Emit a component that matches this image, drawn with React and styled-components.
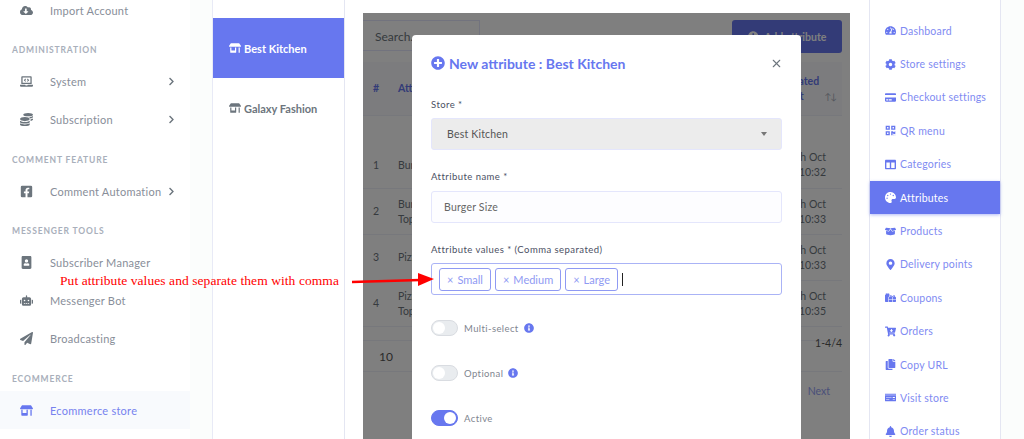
import { createGlobalStyle, styled } from 'styled-components';
import { X } from 'lucide-react';
import {
    FaBell,
    FaBoxOpen,
    FaCartArrowDown,
    FaChevronRight,
    FaCloudDownloadAlt,
    FaCoins,
    FaColumns,
    FaCopy,
    FaCreditCard,
    FaFacebookSquare,
    FaGifts,
    FaInfoCircle,
    FaLaptopCode,
    FaMapMarkerAlt,
    FaMoneyCheck,
    FaPalette,
    FaPaperPlane,
    FaPlusCircle,
    FaPortrait,
    FaQrcode,
    FaCog,
    FaRobot,
    FaStoreAlt,
    FaTachometerAlt,
} from 'react-icons/fa';

const GlobalStyle = createGlobalStyle`
    html, body {
        margin: 0;
        background: #fbfdfc;
    }
    * {
        box-sizing: border-box;
    }
`;

const Page = styled.div`
    position: relative;
    display: flex;
    width: 1024px;
    height: 439px;
    overflow: hidden;
    font-family: Lato, 'Liberation Sans', sans-serif;
    font-size: 13px;
`;

const Sidebar = styled.nav`
    flex: 0 0 190px;
    margin-top: -9px;
    background: #fff;
`;

const SectionLabel = styled.div`
    height: 33.6px;
    padding: 15px 0 0 12px;
    font-size: 8.5px;
    line-height: 12px;
    font-weight: 700;
    letter-spacing: 0.85px;
    text-transform: uppercase;
    color: #a9afbb;
`;

const SideRow = styled.a`
    display: flex;
    align-items: center;
    height: 38px;
    padding: 0 14px 0 20px;
    font-size: 11px;
    letter-spacing: 0.25px;
    color: ${(p) => (p.$active ? '#7682ef' : '#888e99')};
    background: ${(p) => (p.$active ? '#f8fafd' : 'transparent')};

    & > svg:first-child {
        flex: 0 0 13px;
        font-size: 13px;
        margin-right: 17px;
        color: ${(p) => (p.$active ? '#6777ef' : '#6c757d')};
    }
`;

const Chevron = styled(FaChevronRight)`
    margin-left: auto;
    font-size: 9px;
    color: #6c757d;
`;

const StoreCard = styled.div`
    flex: 0 0 133px;
    margin-left: 22px;
    padding-top: 18px;
    background: #fff;
    border-left: 1px solid #e8eaf6;
    border-right: 1px solid #e4e6f2;
`;

const StoreItem = styled.div`
    display: flex;
    align-items: center;
    gap: 3px;
    height: 60px;
    padding-left: 16px;
    font-size: 11px;
    font-weight: 700;
    color: ${(p) => (p.$active ? '#fff' : '#6c757d')};
    background: ${(p) => (p.$active ? '#6777ef' : 'transparent')};

    svg {
        font-size: 12px;
    }
`;

const Content = styled.main`
    flex: 0 0 524px;
    padding: 13px 19px 0 18px;
    background: #fff;
`;

const Panel = styled.div`
    position: relative;
    height: 100%;
    padding: 7px 8px 0 0;
    overflow: hidden;
    background: #fff;
    color: #6c757d;
`;

const Backdrop = styled.div`
    position: absolute;
    inset: 0;
    background: rgba(0, 0, 0, 0.5);
`;

const Toolbar = styled.div`
    display: flex;
    justify-content: space-between;
    height: 42px;
`;

const SearchBox = styled.div`
    width: 117px;
    height: 31px;
    padding: 8px 0 0 12px;
    font-size: 12px;
    border: 1px solid #e4e6fc;
    border-left: 0;
    color: #6c757d;
`;

const AddButton = styled.div`
    display: flex;
    align-items: center;
    justify-content: center;
    gap: 6px;
    width: 110px;
    height: 33px;
    font-size: 10.5px;
    font-weight: 700;
    color: #fff;
    background: #6777ef;
    border-radius: 3px;
`;

const TableRow = styled.div`
    display: grid;
    grid-template-columns: 26px 1fr 90px;
    align-items: center;
    height: ${(p) => p.$height}px;
    padding-top: ${(p) => p.$top || 0}px;
    background: ${(p) => (p.$head ? '#f8f9fc' : '#fff')};
    border-bottom: 1px solid #eef0f8;
    line-height: 15px;
    font-size: 10.5px;
    font-weight: ${(p) => (p.$head ? 700 : 400)};
    color: ${(p) => (p.$head ? '#6777ef' : '#6c757d')};

    & > :first-child {
        text-align: center;
    }
    & > :nth-child(2) {
        padding-left: 9px;
    }
    & > :last-child {
        padding: ${(p) => (p.$head ? '0 0 0 4px' : '0 16px 0 0')};
        text-align: ${(p) => (p.$head ? 'center' : 'right')};
    }
`;

const SortMark = styled.span`
    position: absolute;
    right: 14px;
    top: 78px;
    font-size: 9px;
    letter-spacing: -1px;
    color: #a6aab8;
`;

const TableFoot = styled.div`
    display: flex;
    justify-content: space-between;
    height: 32px;
    margin-top: 13px;
    padding: 0 0 0 16px;
    border-top: 1px solid #eef0f8;
    border-bottom: 1px solid #eef0f8;
    font-size: 12px;
    line-height: 31px;
    color: #555;

    span:last-child {
        margin-top: -13px;
        font-size: 10.5px;
    }
`;

const NextLink = styled.div`
    margin-top: 13px;
    padding-right: 12px;
    text-align: right;
    font-size: 10.5px;
    color: #6777ef;
    opacity: 0.7;
`;

const Modal = styled.div`
    position: absolute;
    left: 49px;
    top: 22px;
    width: 389px;
    height: 420px;
    padding: 0 19px;
    background: #fff;
    border-radius: 4px;
`;

const ModalHeader = styled.div`
    display: flex;
    align-items: center;
    height: 56px;
    margin-bottom: 7px;
`;

const ModalTitle = styled.h5`
    display: flex;
    align-items: center;
    gap: 4px;
    margin: 0;
    font-size: 14px;
    font-weight: 700;
    color: #6777ef;
`;

const CloseButton = styled(X)`
    margin-left: auto;
    margin-right: -1px;
    color: #6c757d;
`;

const Field = styled.div`
    margin-bottom: ${(p) => p.$after || 20}px;
`;

const Label = styled.label`
    display: block;
    height: 14px;
    margin-bottom: ${(p) => p.$gap || 6}px;
    font-size: 9.5px;
    line-height: 14px;
    letter-spacing: 0.45px;
    color: #4b4f63;
`;

const SelectBox = styled.div`
    display: flex;
    align-items: center;
    justify-content: space-between;
    height: 32px;
    padding: 0 14px 0 15px;
    font-size: 10.5px;
    letter-spacing: 0.2px;
    color: #555;
    background: #ececec;
    border: 1px solid #e4e6fc;
    border-radius: 3px;
`;

const Caret = styled.span`
    width: 0;
    height: 0;
    border-left: 3.5px solid transparent;
    border-right: 3.5px solid transparent;
    border-top: 4px solid #777;
`;

const TextInput = styled.div`
    display: flex;
    align-items: center;
    height: 32px;
    padding: 0 12px;
    font-size: 10.5px;
    letter-spacing: 0.2px;
    color: #666;
    background: #fdfdff;
    border: 1px solid #e4e6fc;
    border-radius: 3px;
`;

const TagInput = styled.div`
    display: flex;
    align-items: center;
    gap: 4px;
    height: 32px;
    padding: 0 7px;
    background: #fff;
    border: 1px solid #aab3f6;
    border-radius: 3px;
`;

const Tag = styled.span`
    display: flex;
    align-items: center;
    gap: 4px;
    height: 23px;
    padding: 0 7px;
    font-size: 11px;
    color: #8f9af3;
    border: 1px solid #8f9af3;
    border-radius: 3px;

    i {
        font-style: normal;
        font-size: 11px;
    }
`;

const Cursor = styled.span`
    width: 1px;
    height: 13px;
    background: #222;
`;

const SwitchRow = styled.div`
    display: flex;
    align-items: center;
    height: 16px;
    margin-bottom: 29px;
    font-size: 9.5px;
    letter-spacing: 0.4px;
    color: #80858f;

    svg {
        margin-left: 5px;
        font-size: 10px;
        color: #6777ef;
    }
`;

const Switch = styled.span`
    position: relative;
    flex: 0 0 27px;
    height: 16px;
    margin-right: 6px;
    border-radius: 8px;
    background: ${(p) => (p.$on ? '#6777ef' : '#e9ecef')};
    border: 1px solid ${(p) => (p.$on ? '#6777ef' : '#d9dce1')};

    &::after {
        content: '';
        position: absolute;
        top: 1px;
        left: ${(p) => (p.$on ? '12px' : '1px')};
        width: 12px;
        height: 12px;
        border-radius: 50%;
        background: #fff;
    }
`;

const RightMenu = styled.nav`
    flex: 0 0 132px;
    padding-top: 14px;
    background: #fff;
    border-left: 1px solid #e4e6f2;
    border-right: 1px solid #e4e6f2;
`;

const MenuLink = styled.a`
    display: flex;
    align-items: center;
    height: 33.4px;
    padding-left: 15px;
    font-size: 10.5px;
    letter-spacing: 0.2px;
    color: ${(p) => (p.$active ? '#fff' : '#7f8bf2')};
    background: ${(p) => (p.$active ? '#6777ef' : 'transparent')};
    box-shadow: ${(p) => (p.$active ? '0 1px 3px rgba(103, 119, 239, 0.5)' : 'none')};

    svg {
        width: auto;
        height: 11px;
        margin-right: 4px;
        color: ${(p) => (p.$active ? '#fff' : '#6777ef')};
    }
`;

const Annotation = styled.div`
    position: absolute;
    left: 60px;
    top: 273px;
    font-family: 'Liberation Serif', serif;
    font-size: 13.5px;
    line-height: 16px;
    letter-spacing: 0.07px;
    white-space: nowrap;
    color: #f00;
`;

const ArrowMark = styled.svg`
    position: absolute;
    left: 350px;
    top: 270px;
`;

const sideGroups = [
    { items: [{ icon: FaCloudDownloadAlt, text: 'Import Account' }] },
    {
        label: 'Administration',
        items: [
            { icon: FaLaptopCode, text: 'System', more: true },
            { icon: FaCoins, text: 'Subscription', more: true },
        ],
    },
    {
        label: 'Comment Feature',
        items: [{ icon: FaFacebookSquare, text: 'Comment Automation', more: true }],
    },
    {
        label: 'Messenger Tools',
        items: [
            { icon: FaPortrait, text: 'Subscriber Manager' },
            { icon: FaRobot, text: 'Messenger Bot' },
            { icon: FaPaperPlane, text: 'Broadcasting' },
        ],
    },
    {
        label: 'Ecommerce',
        items: [{ icon: FaStoreAlt, text: 'Ecommerce store', active: true }],
    },
];

const menu = [
    { icon: FaTachometerAlt, text: 'Dashboard' },
    { icon: FaCog, text: 'Store settings' },
    { icon: FaCreditCard, text: 'Checkout settings' },
    { icon: FaQrcode, text: 'QR menu' },
    { icon: FaColumns, text: 'Categories' },
    { icon: FaPalette, text: 'Attributes', active: true },
    { icon: FaBoxOpen, text: 'Products' },
    { icon: FaMapMarkerAlt, text: 'Delivery points' },
    { icon: FaGifts, text: 'Coupons' },
    { icon: FaCartArrowDown, text: 'Orders' },
    { icon: FaCopy, text: 'Copy URL' },
    { icon: FaMoneyCheck, text: 'Visit store' },
    { icon: FaBell, text: 'Order status' },
];

const rows = [
    { id: 1, name: ['Burger Size'], time: '10:32', height: 73, top: 26 },
    { id: 2, name: ['Burger', 'Topping'], time: '10:33', height: 46 },
    { id: 3, name: ['Pizza Size'], time: '10:33', height: 46 },
    { id: 4, name: ['Pizza', 'Topping'], time: '10:35', height: 46 },
];

function App() {
    return (
        <Page>
            <GlobalStyle />

            <Sidebar>
                {sideGroups.map((group, i) => (
                    <div key={i}>
                        {group.label && <SectionLabel>{group.label}</SectionLabel>}
                        {group.items.map((item) => (
                            <SideRow key={item.text} $active={item.active}>
                                <item.icon />
                                {item.text}
                                {item.more && <Chevron />}
                            </SideRow>
                        ))}
                    </div>
                ))}
            </Sidebar>

            <StoreCard>
                <StoreItem $active>
                    <FaStoreAlt /> Best Kitchen
                </StoreItem>
                <StoreItem>
                    <FaStoreAlt /> Galaxy Fashion
                </StoreItem>
            </StoreCard>

            <Content>
                <Panel>
                    <Toolbar>
                        <SearchBox>Search...</SearchBox>
                        <AddButton>
                            <FaPlusCircle /> Add attribute
                        </AddButton>
                    </Toolbar>
                    <TableRow $head $height={54}>
                        <span>#</span>
                        <span>Attribute name</span>
                        <span>
                            Updated
                            <br />
                            at
                        </span>
                    </TableRow>
                    <SortMark>↑↓</SortMark>
                    {rows.map((row) => (
                        <TableRow key={row.id} $height={row.height} $top={row.top}>
                            <span>{row.id}</span>
                            <span>
                                {row.name.map((line) => (
                                    <div key={line}>{line}</div>
                                ))}
                            </span>
                            <span>
                                19th Oct
                                <br />
                                2021 {row.time}
                            </span>
                        </TableRow>
                    ))}
                    <TableFoot>
                        <span>10</span>
                        <span>1-4/4</span>
                    </TableFoot>
                    <NextLink>Next</NextLink>

                    <Backdrop />

                    <Modal>
                        <ModalHeader>
                            <ModalTitle>
                                <FaPlusCircle size={14} /> New attribute : Best Kitchen
                            </ModalTitle>
                            <CloseButton size={13} strokeWidth={2} />
                        </ModalHeader>

                        <Field>
                            <Label>Store *</Label>
                            <SelectBox>
                                Best Kitchen
                                <Caret />
                            </SelectBox>
                        </Field>

                        <Field>
                            <Label $gap={7}>Attribute name *</Label>
                            <TextInput>Burger Size</TextInput>
                        </Field>

                        <Field $after={25}>
                            <Label>Attribute values * (Comma separated)</Label>
                            <TagInput>
                                {['Small', 'Medium', 'Large'].map((value) => (
                                    <Tag key={value}>
                                        <i>×</i> {value}
                                    </Tag>
                                ))}
                                <Cursor />
                            </TagInput>
                        </Field>

                        <SwitchRow>
                            <Switch />
                            Multi-select
                            <FaInfoCircle />
                        </SwitchRow>
                        <SwitchRow>
                            <Switch />
                            Optional
                            <FaInfoCircle />
                        </SwitchRow>
                        <SwitchRow>
                            <Switch $on />
                            Active
                        </SwitchRow>
                    </Modal>
                </Panel>
            </Content>

            <RightMenu>
                {menu.map((item) => (
                    <MenuLink key={item.text} $active={item.active}>
                        <item.icon />
                        {item.text}
                    </MenuLink>
                ))}
            </RightMenu>

            <Annotation>Put attribute values and separate them with comma</Annotation>
            <ArrowMark width="86" height="20" viewBox="0 0 86 20">
                <path d="M2 12 L70 10" stroke="#f00" strokeWidth="2.5" fill="none" />
                <path d="M68 3 L84 9 L68 16 Z" fill="#f00" />
            </ArrowMark>
        </Page>
    );
}

export default App;
